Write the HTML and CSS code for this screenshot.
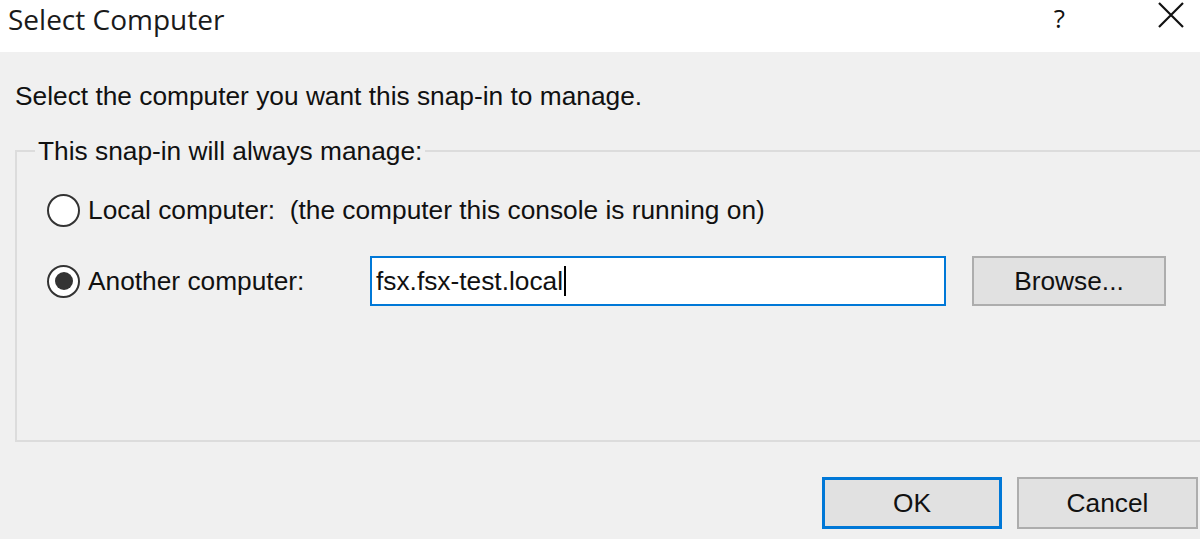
FILE: index.html
```html
<!DOCTYPE html>
<html>
<head>
<meta charset="utf-8">
<link rel="stylesheet" href="styles.css">
</head>
<body>
<div class="dialog">
  <div class="titlebar">
    <span class="title">Select Computer</span>
    <div class="controls">
      <span class="help">?</span>
      <svg class="close" width="26" height="26" viewBox="0 0 26 26"><path d="M1 1 L25 25 M25 1 L1 25" stroke="#111" stroke-width="2.2" fill="none"/></svg>
    </div>
  </div>
  <div class="content">
    <p class="intro">Select the computer you want this snap-in to manage.</p>
    <fieldset class="group">
      <legend>This snap-in will always manage:</legend>
      <div class="row row-local">
        <span class="radio"></span>
        <span class="label">Local computer:&nbsp; (the computer this console is running on)</span>
      </div>
      <div class="row row-other">
        <span class="radio checked"></span>
        <span class="label label-fixed">Another computer:</span>
        <div class="textbox">fsx.fsx-test.local<span class="caret"></span></div>
        <div class="btn btn-browse">Browse...</div>
      </div>
    </fieldset>
    <div class="actions">
      <div class="btn btn-ok">OK</div>
      <div class="btn btn-cancel">Cancel</div>
    </div>
  </div>
</div>
</body>
</html>
```
FILE: styles.css
```css
html, body {
  margin: 0;
  padding: 0;
  width: 1200px;
  height: 539px;
  overflow: hidden;
  background: #f0f0f0;
}
.dialog {
  width: 1200px;
  height: 539px;
  display: flex;
  flex-direction: column;
  font-family: "Liberation Sans", Arial, sans-serif;
  color: #111;
}
.titlebar {
  height: 52px;
  background: #ffffff;
  display: flex;
  align-items: flex-start;
  justify-content: space-between;
  flex-shrink: 0;
}
.title {
  font-family: "Open Sans", "Noto Sans", sans-serif;
  font-size: 28px;
  line-height: 38px;
  margin-left: 8px;
  color: #1a1a1a;
}
.controls {
  display: flex;
  align-items: flex-start;
}
.help {
  font-family: "Open Sans", sans-serif;
  font-size: 26px;
  line-height: 36px;
  color: #111;
  margin-right: 93px;
}
.close {
  margin-top: 2px;
  margin-right: 16px;
}
.content {
  flex: 1;
  display: flex;
  flex-direction: column;
  padding-left: 15px;
}
.intro {
  margin: 28px 0 0 0;
  font-size: 26.3px;
  line-height: 32px;
}
.group {
  margin: 24px -30px 0 0;
  padding: 0 0 0 30px;
  border: 2px solid #dcdcdc;
  height: 306px;
  box-sizing: border-box;
}
.group legend {
  font-size: 26.3px;
  line-height: 30px;
  padding: 0 3px;
  margin-left: -12px;
}
.row {
  display: flex;
  align-items: center;
  font-size: 26.3px;
}
.row-local {
  margin-top: 24px;
  height: 40px;
}
.row-other {
  margin-top: 26px;
  height: 50px;
}
.radio {
  width: 33px;
  height: 33px;
  box-sizing: border-box;
  border: 2px solid #333;
  border-radius: 50%;
  background: #fff;
  display: flex;
  align-items: center;
  justify-content: center;
  margin-right: 8px;
  flex-shrink: 0;
}
.radio.checked::after {
  content: "";
  width: 18px;
  height: 18px;
  border-radius: 50%;
  background: #333;
}
.label {
  white-space: nowrap;
}
.label-fixed {
  width: 282px;
}
.textbox {
  width: 576px;
  height: 50px;
  box-sizing: border-box;
  border: 2px solid #0078d7;
  background: #fff;
  display: flex;
  align-items: center;
  padding-left: 4px;
  font-size: 26.3px;
}
.caret {
  width: 2px;
  height: 30px;
  background: #000;
  margin-left: 1px;
}
.btn {
  box-sizing: border-box;
  background: #e1e1e1;
  border: 2px solid #adadad;
  display: flex;
  align-items: center;
  justify-content: center;
  font-size: 26.3px;
}
.btn-browse {
  width: 194px;
  height: 50px;
  margin-left: 26px;
}
.actions {
  display: flex;
  justify-content: flex-end;
  margin-top: 35px;
  margin-right: 2px;
}
.btn-ok {
  width: 180px;
  height: 52px;
  border: 3px solid #0078d7;
}
.btn-cancel {
  width: 181px;
  height: 52px;
  margin-left: 15px;
}
```
